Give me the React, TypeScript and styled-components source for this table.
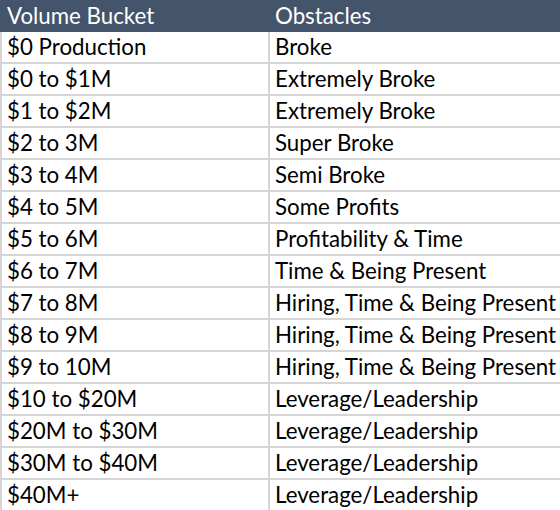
import React from "react";
import styled, { createGlobalStyle } from "styled-components";

const Global = createGlobalStyle`
  html, body { margin: 0; padding: 0; background: #ffffff; }
  body { font-family: Lato, "Open Sans", sans-serif; }
`;

const Sheet = styled.div`
  width: 560px;
  height: 510px;
  overflow: hidden;
  background: #ffffff;
`;

const Header = styled.div`
  display: grid;
  grid-template-columns: 268px 1fr;
  height: 32px;
  background: #44546a;
  color: #ffffff;
`;

const HeadCell = styled.div<{ $pad: number }>`
  padding-left: ${(p) => p.$pad}px;
  font-size: 22.3px;
  line-height: 32px;
  white-space: nowrap;
`;

const Row = styled.div`
  display: grid;
  grid-template-columns: 266px 1fr;
  column-gap: 2px;
  height: 30px;
  border-left: 2px solid #d5d5d5;
  border-bottom: 2px solid #d5d5d5;
  background: #d5d5d5;
`;

const Cell = styled.div`
  background: #ffffff;
  color: #000000;
  padding-left: 5px;
  font-size: 22.3px;
  line-height: 30px;
  white-space: nowrap;
  overflow: hidden;
`;

const rows: [string, string][] = [
  ["$0 Production", "Broke"],
  ["$0 to $1M", "Extremely Broke"],
  ["$1 to $2M", "Extremely Broke"],
  ["$2 to 3M", "Super Broke"],
  ["$3 to 4M", "Semi Broke"],
  ["$4 to 5M", "Some Profits"],
  ["$5 to 6M", "Profitability & Time"],
  ["$6 to 7M", "Time & Being Present"],
  ["$7 to 8M", "Hiring, Time & Being Present"],
  ["$8 to 9M", "Hiring, Time & Being Present"],
  ["$9 to 10M", "Hiring, Time & Being Present"],
  ["$10 to $20M", "Leverage/Leadership"],
  ["$20M to $30M", "Leverage/Leadership"],
  ["$30M to $40M", "Leverage/Leadership"],
  ["$40M+", "Leverage/Leadership"],
];

export default function App() {
  return (
    <Sheet>
      <Global />
      <Header>
        <HeadCell $pad={7}>Volume Bucket</HeadCell>
        <HeadCell $pad={7}>Obstacles</HeadCell>
      </Header>
      {rows.map(([a, b]) => (
        <Row key={a}>
          <Cell>{a}</Cell>
          <Cell>{b}</Cell>
        </Row>
      ))}
    </Sheet>
  );
}
